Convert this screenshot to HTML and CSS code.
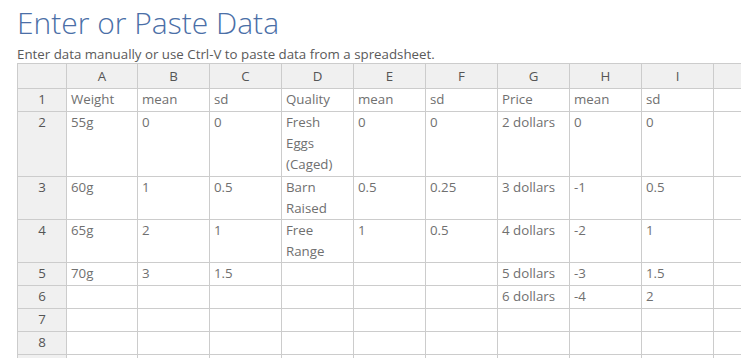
FILE: index.html
```html
<!DOCTYPE html>
<html>
<head>
<meta charset="utf-8">
<link rel="stylesheet" href="styles.css">
</head>
<body>
<div class="page">
  <h1 class="title">Enter or Paste Data</h1>
  <p class="hint">Enter data manually or use Ctrl-V to paste data from a spreadsheet.</p>
  <div class="sheet-wrap">
    <table class="sheet">
      <colgroup>
        <col class="c-rh"><col class="c-a"><col class="c"><col class="c"><col class="c"><col class="c"><col class="c"><col class="c"><col class="c"><col class="c"><col class="c">
      </colgroup>
      <thead>
        <tr>
          <th class="corner"></th><th>A</th><th>B</th><th>C</th><th>D</th><th>E</th><th>F</th><th>G</th><th>H</th><th>I</th><th></th>
        </tr>
      </thead>
      <tbody>
        <tr><th>1</th><td>Weight</td><td>mean</td><td>sd</td><td>Quality</td><td>mean</td><td>sd</td><td>Price</td><td>mean</td><td>sd</td><td></td></tr>
        <tr class="tall3"><th>2</th><td>55g</td><td>0</td><td>0</td><td>Fresh Eggs (Caged)</td><td>0</td><td>0</td><td>2 dollars</td><td>0</td><td>0</td><td></td></tr>
        <tr class="tall2"><th>3</th><td>60g</td><td>1</td><td>0.5</td><td>Barn Raised</td><td>0.5</td><td>0.25</td><td>3 dollars</td><td>-1</td><td>0.5</td><td></td></tr>
        <tr class="tall2"><th>4</th><td>65g</td><td>2</td><td>1</td><td>Free Range</td><td>1</td><td>0.5</td><td>4 dollars</td><td>-2</td><td>1</td><td></td></tr>
        <tr><th>5</th><td>70g</td><td>3</td><td>1.5</td><td></td><td></td><td></td><td>5 dollars</td><td>-3</td><td>1.5</td><td></td></tr>
        <tr><th>6</th><td></td><td></td><td></td><td></td><td></td><td></td><td>6 dollars</td><td>-4</td><td>2</td><td></td></tr>
        <tr><th>7</th><td></td><td></td><td></td><td></td><td></td><td></td><td></td><td></td><td></td><td></td></tr>
        <tr><th>8</th><td></td><td></td><td></td><td></td><td></td><td></td><td></td><td></td><td></td><td></td></tr>
        <tr><th></th><td></td><td></td><td></td><td></td><td></td><td></td><td></td><td></td><td></td><td></td></tr>
      </tbody>
    </table>
  </div>
</div>
</body>
</html>
```
FILE: styles.css
```css
html, body {
  margin: 0;
  padding: 0;
  background: #fff;
  overflow: hidden;
}
.page {
  padding: 0 0 0 17px;
  font-family: "Open Sans", "DejaVu Sans", sans-serif;
}
.title {
  margin: 0;
  padding-top: 4px;
  font-size: 30px;
  font-weight: 300;
  line-height: 38px;
  color: #4b6fa7;
}
.hint {
  margin: 3px 0 0 0;
  font-size: 13.3px;
  line-height: 18px;
  color: #5a5a5a;
}
.sheet-wrap {
  width: 800px;
}
.sheet {
  border-collapse: separate;
  border-spacing: 0;
  table-layout: fixed;
  width: 758px;
  font-size: 13.3px;
  color: #707070;
}
.c-rh { width: 50px; }
.c-a { width: 71px; }
.c { width: 72px; }
.sheet th, .sheet td {
  border-right: 1px solid #ccc;
  border-bottom: 1px solid #ccc;
  padding: 0 4px 1px 4px;
  line-height: 21px;
  height: 22px;
  box-sizing: border-box;
  vertical-align: top;
  text-align: left;
  font-weight: 400;
  overflow: hidden;
}
.sheet .tall2 th, .sheet .tall2 td {
  height: 43px;
  padding-bottom: 0;
}
.sheet .tall3 th, .sheet .tall3 td {
  height: 65px;
}
.sheet thead th {
  border-top: 1px solid #ccc;
  background: #f0f0f0;
  text-align: center;
  color: #555;
  height: 26px;
  line-height: 24px;
  padding: 0 4px;
  vertical-align: middle;
}
.sheet tbody th {
  background: #f0f0f0;
  text-align: center;
  color: #555;
}
.sheet tr > :first-child {
  border-left: 1px solid #ccc;
}
```
